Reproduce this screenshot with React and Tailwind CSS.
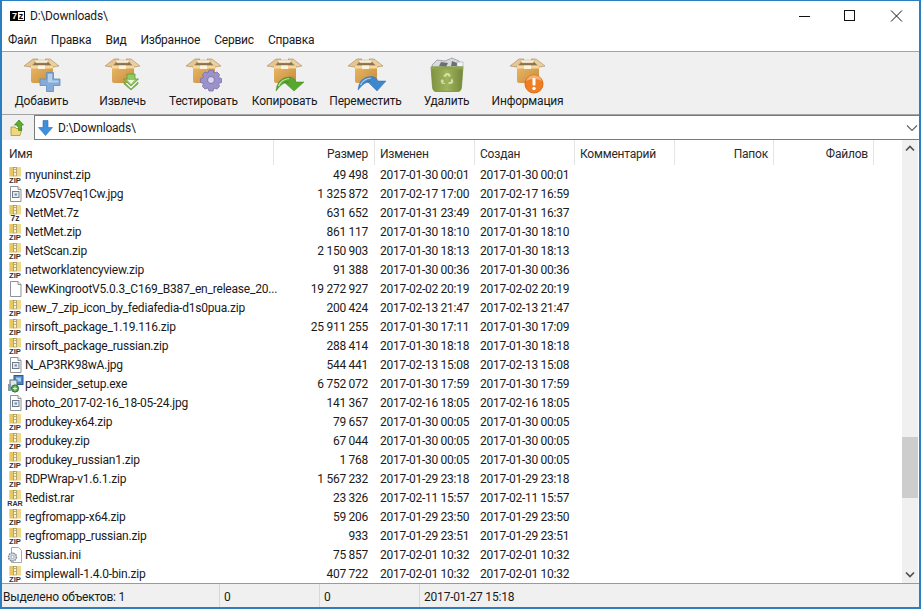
const rows = [
  ["zip","myuninst.zip","49 498","2017-01-30 00:01","2017-01-30 00:01"],
  ["jpg","MzO5V7eq1Cw.jpg","1 325 872","2017-02-17 17:00","2017-02-17 16:59"],
  ["7z","NetMet.7z","631 652","2017-01-31 23:49","2017-01-31 16:37"],
  ["zip","NetMet.zip","861 117","2017-01-30 18:10","2017-01-30 18:10"],
  ["zip","NetScan.zip","2 150 903","2017-01-30 18:13","2017-01-30 18:13"],
  ["zip","networklatencyview.zip","91 388","2017-01-30 00:36","2017-01-30 00:36"],
  ["doc","NewKingrootV5.0.3_C169_B387_en_release_20...","19 272 927","2017-02-02 20:19","2017-02-02 20:19"],
  ["zip","new_7_zip_icon_by_fediafedia-d1s0pua.zip","200 424","2017-02-13 21:47","2017-02-13 21:47"],
  ["zip","nirsoft_package_1.19.116.zip","25 911 255","2017-01-30 17:11","2017-01-30 17:09"],
  ["zip","nirsoft_package_russian.zip","288 414","2017-01-30 18:18","2017-01-30 18:18"],
  ["jpg","N_AP3RK98wA.jpg","544 441","2017-02-13 15:08","2017-02-13 15:08"],
  ["exe","peinsider_setup.exe","6 752 072","2017-01-30 17:59","2017-01-30 17:59"],
  ["jpg","photo_2017-02-16_18-05-24.jpg","141 367","2017-02-16 18:05","2017-02-16 18:05"],
  ["zip","produkey-x64.zip","79 657","2017-01-30 00:05","2017-01-30 00:05"],
  ["zip","produkey.zip","67 044","2017-01-30 00:05","2017-01-30 00:05"],
  ["zip","produkey_russian1.zip","1 768","2017-01-30 00:05","2017-01-30 00:05"],
  ["zip","RDPWrap-v1.6.1.zip","1 567 232","2017-01-29 23:18","2017-01-29 23:18"],
  ["rar","Redist.rar","23 326","2017-02-11 15:57","2017-02-11 15:57"],
  ["zip","regfromapp-x64.zip","59 206","2017-01-29 23:50","2017-01-29 23:50"],
  ["zip","regfromapp_russian.zip","933","2017-01-29 23:51","2017-01-29 23:51"],
  ["ini","Russian.ini","75 857","2017-02-01 10:32","2017-02-01 10:32"],
  ["zip","simplewall-1.4.0-bin.zip","407 722","2017-02-01 10:32","2017-02-01 10:32"],
];

function Arc({ label }) {
  const rar = label === "RAR";
  return (
    <svg width="16" height="16" viewBox="0 0 16 16" className="shrink-0" overflow="visible">
      <rect x="0.500" y="0" width="11.500" height="10" fill="#efd98c" />
      <rect x="0.500" y="0" width="4" height="10" fill="#e5c862" />
      <rect x="4.500" y="0.500" width="3" height="8.500" fill="#fbf4cf" stroke="#9c8a58" strokeWidth="0.700" />
      <rect x="5.500" y="2" width="1" height="1" fill="#7a6a3c" />
      <rect x="5.500" y="5" width="1" height="1" fill="#7a6a3c" />
      <rect x={rar ? -2 : 0} y="9.500" width={rar ? 16 : 12} height="6.500" fill="#fff" opacity="0.900" />
      <text x="6" y="15.600" textAnchor="middle" fontSize={label === "7z" ? "8.500" : rar ? "7.200" : "7.600"} fontWeight="700" fill="#333" letterSpacing="0" style={{ fontFamily: "'Liberation Sans',sans-serif" }}>{label}</text>
    </svg>
  );
}

function FileIcon({ kind }) {
  if (kind === "zip") return <Arc label="ZIP" />;
  if (kind === "7z") return <Arc label="7z" />;
  if (kind === "rar") return <Arc label="RAR" />;
  if (kind === "exe")
    return (
      <svg width="18" height="18" viewBox="0 0 18 18" className="shrink-0 -ml-[2px]">
        <rect x="7" y="0.500" width="9" height="9" fill="#4a86c8" stroke="#2a5a94" />
        <rect x="9" y="2.500" width="5" height="4" fill="#a8d0f0" />
        <rect x="3" y="5" width="7" height="8" fill="#dfe6ee" stroke="#5a6a7c" />
        <rect x="1" y="9" width="3" height="7" fill="#8a99a8" />
        <circle cx="8" cy="13.500" r="3.600" fill="#4fae4a" stroke="#2e6f2c" />
        <path d="M8 11.500v4M6 13.500h4" stroke="#fff" strokeWidth="0.800" />
      </svg>
    );
  if (kind === "ini")
    return (
      <svg width="18" height="16" viewBox="0 0 18 16" className="shrink-0 -ml-[2px]">
        <path d="M4.500 .5h7l3 3v12h-10z" fill="#fff" stroke="#a8a8a8" />
        <circle cx="5.500" cy="10" r="4" fill="#d4d8e0" stroke="#7d8696" strokeDasharray="1.600 .8" strokeWidth="1.400" />
        <circle cx="5.500" cy="10" r="1.500" fill="#fff" stroke="#7d8696" strokeWidth=".6" />
      </svg>
    );
  return (
    <svg width="16" height="16" viewBox="0 0 16 16" className="shrink-0">
      <path d="M1.500 .5h7.500l3 3V15.500H1.500z" fill="#fff" stroke="#8d9298" />
      <path d="M9 .5v3h3" fill="#eef1f4" stroke="#8d9298" />
      {kind === "jpg" && (
        <>
          <rect x="3.500" y="5.500" width="6.500" height="6" fill="#e8edf2" stroke="#6d7c8c" />
          <rect x="5.500" y="7.500" width="2.500" height="2" fill="#7d8ea0" />
        </>
      )}
    </svg>
  );
}

function Box() {
  return (
    <>
      <path d="M8 9 L13 4 L29 4 L34 9 L31 13 L11 13 Z" fill="#8a7350" />
      <path d="M3 10 L12 3 L17 3 L10 11 Z" fill="#e6c590" stroke="#a8865a" strokeWidth=".6" />
      <path d="M38 10 L29 3 L24 3 L32 11 Z" fill="#eccf9e" stroke="#a8865a" strokeWidth=".6" />
      <path d="M13 4 H28 L26 7 H15 Z" fill="#f7edd8" stroke="#b89868" strokeWidth=".4" />
      <path d="M10 9.500 H32 V25 Q32 27 30 27 H12 Q10 27 10 25 Z" fill="url(#boxg)" />
      <rect x="10" y="9.500" width="22" height="3" fill="#f6d79c" />
      <rect x="17" y="9.500" width="7" height="3.500" fill="#fdf3dd" />
    </>
  );
}

const overlays = {
  add: (
    <>
      <path d="M25.500 16.500h7v6.500h6.500v6.500h-6.500v6h-7v-6h-6.500v-6.500h6.500z" fill="#83add8" stroke="#5f8cba" strokeWidth=".8" />
      <path d="M27 18h4v6.500h6.500v2h-10.500z" fill="#b4d0ec" />
    </>
  ),
  extract: (
    <>
      <path d="M25 18h8v5h3.500l-7.500 7-7.500-7H25z" fill="#8fcb62" stroke="#5e9a38" strokeWidth=".8" />
      <path d="M22 26l7 7 7-7v2l-7 6-7-6z" fill="#7dba50" stroke="#5e9a38" strokeWidth=".6" />
      <path d="M29 28l-3.500-4h7z" fill="#eef8dc" />
    </>
  ),
  test: (
    <>
      <path d="M26 14h4l1 3 3-1 2.500 2.500-1 3 3 1v4l-3 1 1 3-2.500 2.500-3-1-1 3h-4l-1-3-3 1-2.500-2.500 1-3-3-1v-4l3-1-1-3 2.500-2.500 3 1z" fill="#9b92cc" stroke="#7a72a8" strokeWidth=".8" />
      <circle cx="28" cy="24" r="3.500" fill="#d9d5ef" stroke="#6d6599" strokeWidth=".8" />
    </>
  ),
  copy: (
    <>
      <path d="M12 35 Q13 22 25 21 Q30 21 32 26 H40 L30 35 L20 26 H25 Q18 26 12 35 Z" fill="#58a82e" stroke="#3f851f" strokeWidth=".5" />
      <path d="M14.500 30 Q17 23.500 25 22.500" stroke="#c8e8a6" strokeWidth="1.200" fill="none" />
    </>
  ),
  move: (
    <>
      <path d="M13 34 Q14 21 26 20.500 Q31 20.500 33 25 H41 L32 35 L22 25 H26 Q19 26 13 34 Z" fill="#3f87cc" stroke="#2f70ae" strokeWidth=".5" />
      <path d="M15.500 29 Q18 23 26 22" stroke="#a8d0f2" strokeWidth="1.200" fill="none" />
    </>
  ),
  info: (
    <>
      <circle cx="27" cy="28" r="9" fill="#ee7d24" stroke="#dd6a12" />
      <path d="M19 25a8.500 8.500 0 0 1 16 0a12 8 0 0 0 -16 0z" fill="#f9b06e" />
      <rect x="25.500" y="22" width="3" height="7.500" rx="1" fill="#fff" />
      <circle cx="27" cy="32.500" r="1.700" fill="#fff" />
    </>
  ),
};

function ToolIcon({ name }) {
  if (name === "delete")
    return (
      <svg width="42" height="36" viewBox="0 0 42 36">
        <defs>
          <linearGradient id="bing" x1="0" x2="1" y1="0" y2="0">
            <stop offset="0" stopColor="#7f9240" />
            <stop offset=".5" stopColor="#9fb35c" />
            <stop offset="1" stopColor="#75883a" />
          </linearGradient>
        </defs>
        <path d="M6 9 L11 4 L19 5 L26 2 L33 5 L37 10 L35 13 H7 Z" fill="#d8dadc" stroke="#8a8c90" strokeWidth=".7" />
        <path d="M15 6l7 1-2 4-7-1zM26 5l5 2 0 3-6 0z" fill="#6c7076" />
        <rect x="31" y="6" width="6" height="5" fill="#f3f4f5" stroke="#9a9ca0" strokeWidth=".5" />
        <path d="M5 11 H37 L35.500 31 Q35 35.500 32 35.500 H10 Q7 35.500 6.500 31 Z" fill="url(#bing)" stroke="#6e8536" strokeWidth=".7" />
        <rect x="5" y="10.500" width="32" height="3" fill="#8ea250" />
        <path d="M17 20l3-3h3l2 3-2 1-1.500-2-2 2zM26 22l1.500 4-2 2h-3v-2h2l.5-2zM19 28h-3l-1.500-3 1.500-2 2 2-1 2h2z" fill="#cfdea4" />
      </svg>
    );
  return (
    <svg width="42" height="36" viewBox="0 0 42 36" overflow="visible">
      <defs>
        <linearGradient id="boxg" x1="0" x2="1" y1="0" y2="1">
          <stop offset="0" stopColor="#eab968" />
          <stop offset="1" stopColor="#c58b3c" />
        </linearGradient>
      </defs>
      <Box />
      {overlays[name]}
    </svg>
  );
}

const tools = [
  ["add","Добавить"],["extract","Извлечь"],["test","Тестировать"],["copy","Копировать"],
  ["move","Переместить"],["delete","Удалить"],["info","Информация"],
];
const menus = ["Файл","Правка","Вид","Избранное","Сервис","Справка"];

const COLS = "grid grid-cols-[272px_101px_100px_100px_100px_99px_100px_100px]";

export default function App() {
  return (
    <div className="w-[921px] h-[609px] overflow-hidden flex flex-col bg-white border-x-2 border-t border-b-2 border-[#2b7fc0] text-[12px] leading-[16px] tracking-[-0.2px] text-[#1a1a1a]" style={{ fontFamily: "Roboto,'Open Sans',sans-serif" }}>
      <div className="h-[29px] flex items-center shrink-0">
        <div className="ml-[8px] w-[15px] h-[10px] border border-black flex overflow-hidden font-bold text-[9px] leading-[8px] text-center" style={{ fontFamily: "'Liberation Sans',sans-serif" }}>
          <span className="w-[7px] bg-black text-white">7</span>
          <span className="flex-1 bg-white text-black">z</span>
        </div>
        <span className="ml-[5px]">D:\Downloads\</span>
        <div className="ml-auto flex items-center">
          <svg width="46" height="29" viewBox="0 0 46 29"><path d="M18 15.500h11" stroke="#111" /></svg>
          <svg width="46" height="29" viewBox="0 0 46 29"><rect x="17.500" y="9.500" width="10" height="10" fill="none" stroke="#111" /></svg>
          <svg width="46" height="29" viewBox="0 0 46 29"><path d="M18 9.500l11 11M29 9.500l-11 11" stroke="#111" /></svg>
        </div>
      </div>
      <div className="h-[21px] flex items-center pl-[6px] gap-[14px] shrink-0 pb-[1px]">
        {menus.map((m) => <span key={m}>{m}</span>)}
      </div>
      <div className="h-[64px] bg-[#f0f0f0] border-y border-[#a3a3a3] flex shrink-0">
        {tools.map(([k, t], i) => (
          <div key={k} className={`w-[81px] flex flex-col items-center pt-[4px] ${i === 0 ? "-ml-[1px]" : ""}`}>
            <ToolIcon name={k} />
            <span className="mt-[1px] whitespace-nowrap">{t}</span>
          </div>
        ))}
      </div>
      <div className="h-[25px] flex items-center bg-[#f0f0f0] shrink-0">
        <div className="w-[32px] flex justify-center">
          <svg width="18" height="18" viewBox="0 0 18 18">
            <path d="M2 8h4l1 1.500h6l-2 7H2z" fill="#f0d878" stroke="#a89040" strokeWidth=".8" />
            <path d="M10 1l4.500 5H12.500v5.500H9.500C10 9 9.500 7.500 8 7V6H5.500z" fill="#5cae2c" stroke="#3d7f18" strokeWidth=".7" />
          </svg>
        </div>
        <div className="flex-1 h-[25px] bg-white border border-[#7a7a7a] border-r-0 flex items-center">
          <svg width="18" height="18" viewBox="0 0 18 18" className="ml-[2px]">
            <path d="M6 1.500h5v7h4.500L8.500 16.500 1.500 8.500H6z" fill="#3f8fde" stroke="#2a6fb8" strokeWidth=".6" />
          </svg>
          <span className="ml-[3px]">D:\Downloads\</span>
          <svg width="12" height="8" viewBox="0 0 12 8" className="ml-auto mr-[1px]"><path d="M1 1.500l5 5 5-5" fill="none" stroke="#666" strokeWidth="1.200" /></svg>
        </div>
      </div>
      <div className="flex-1 flex min-h-0 bg-white border-b border-[#9a9a9a]">
        <div className="flex-1 min-w-0 overflow-hidden">
          <div className={`${COLS} h-[25px] items-start text-[#2a2a2a]`}>
            {[["Имя","text-left pl-[7px]"],["Размер","text-right pr-[6px]"],["Изменен","text-left"],["Создан","text-left"],["Комментарий","text-left"],["Папок","text-right"],["Файлов","text-right"],["",""]].map(([t, a], i) => (
              <div key={i} className={`h-[25px] leading-[28px] px-[5px] border-r border-[#e5e5e5] ${a} ${i === 7 ? "border-r-0" : ""}`}>{t}</div>
            ))}
          </div>
          {rows.map(([k, name, size, m, c]) => (
            <div key={name} className={`${COLS} h-[19px] items-center whitespace-nowrap`}>
              <div className="flex items-center pl-[7px] min-w-0">
                <FileIcon kind={k} />
                <span className="whitespace-nowrap">{name}</span>
              </div>
              <div className="text-right pr-[7px] tracking-[-0.27px]">{size}</div>
              <div className="pl-[5px] tracking-[-0.27px]">{m}</div>
              <div className="pl-[5px] tracking-[-0.27px]">{c}</div>
            </div>
          ))}
        </div>
        <div className="w-[16px] mr-[1px] bg-[#f0f0f0] flex flex-col items-center">
          <div className="h-[17px] flex items-center justify-center">
            <svg width="10" height="7" viewBox="0 0 10 7"><path d="M1 5.500l4-4 4 4" fill="none" stroke="#505050" strokeWidth="1.700" /></svg>
          </div>
          <div className="flex-1 w-full pt-[280px]">
            <div className="h-[61px] w-full bg-[#cdcdcd]" />
          </div>
          <div className="h-[17px] flex items-center justify-center">
            <svg width="10" height="7" viewBox="0 0 10 7"><path d="M1 1.500l4 4 4-4" fill="none" stroke="#505050" strokeWidth="1.700" /></svg>
          </div>
        </div>
      </div>
      <div className="h-[23px] bg-[#f0f0f0] flex items-center shrink-0 leading-[27px]">
        <div className="w-[218px] pl-[1px] border-r border-[#d8d8d8] h-full">Выделено объектов: 1</div>
        <div className="w-[100px] pl-[4px] border-r border-[#d8d8d8] h-full">0</div>
        <div className="w-[100px] pl-[4px] border-r border-[#d8d8d8] h-full">0</div>
        <div className="pl-[4px] h-full">2017-01-27 15:18</div>
      </div>
    </div>
  );
}
